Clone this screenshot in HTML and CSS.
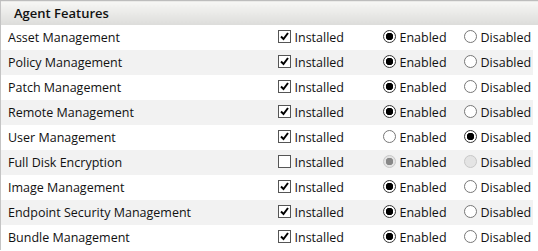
FILE: index.html
```html
<!DOCTYPE html>
<html lang="en">
<head>
    <meta charset="UTF-8">
    <title>Agent Features</title>
    <link rel="stylesheet" href="styles.css">
</head>
<body>
    <table class="features">
        <colgroup>
            <col class="col-name">
            <col class="col-inst">
            <col class="col-en">
            <col class="col-dis">
        </colgroup>
        <thead>
            <tr>
                <th colspan="4">Agent Features</th>
            </tr>
        </thead>
        <tbody>
            <tr>
                <td class="name">Asset Management</td>
                <td class="inst"><span class="check on"></span>Installed</td>
                <td class="en"><span class="radio on"></span>Enabled</td>
                <td class="dis"><span class="radio"></span>Disabled</td>
            </tr>
            <tr>
                <td class="name">Policy Management</td>
                <td class="inst"><span class="check on"></span>Installed</td>
                <td class="en"><span class="radio on"></span>Enabled</td>
                <td class="dis"><span class="radio"></span>Disabled</td>
            </tr>
            <tr>
                <td class="name">Patch Management</td>
                <td class="inst"><span class="check on"></span>Installed</td>
                <td class="en"><span class="radio on"></span>Enabled</td>
                <td class="dis"><span class="radio"></span>Disabled</td>
            </tr>
            <tr>
                <td class="name">Remote Management</td>
                <td class="inst"><span class="check on"></span>Installed</td>
                <td class="en"><span class="radio on"></span>Enabled</td>
                <td class="dis"><span class="radio"></span>Disabled</td>
            </tr>
            <tr>
                <td class="name">User Management</td>
                <td class="inst"><span class="check on"></span>Installed</td>
                <td class="en"><span class="radio"></span>Enabled</td>
                <td class="dis"><span class="radio on"></span>Disabled</td>
            </tr>
            <tr>
                <td class="name">Full Disk Encryption</td>
                <td class="inst"><span class="check"></span>Installed</td>
                <td class="en"><span class="radio on off"></span>Enabled</td>
                <td class="dis"><span class="radio off"></span>Disabled</td>
            </tr>
            <tr>
                <td class="name">Image Management</td>
                <td class="inst"><span class="check on"></span>Installed</td>
                <td class="en"><span class="radio on"></span>Enabled</td>
                <td class="dis"><span class="radio"></span>Disabled</td>
            </tr>
            <tr>
                <td class="name">Endpoint Security Management</td>
                <td class="inst"><span class="check on"></span>Installed</td>
                <td class="en"><span class="radio on"></span>Enabled</td>
                <td class="dis"><span class="radio"></span>Disabled</td>
            </tr>
            <tr>
                <td class="name">Bundle Management</td>
                <td class="inst"><span class="check on"></span>Installed</td>
                <td class="en"><span class="radio on"></span>Enabled</td>
                <td class="dis"><span class="radio"></span>Disabled</td>
            </tr>
        </tbody>
    </table>
</body>
</html>
```

FILE: styles.css
```css
body {
    margin: 0;
    font-family: "Open Sans", sans-serif;
    font-size: 12.5px;
    color: #111;
    background: #fff;
}
.features {
    width: 538px;
    border-collapse: collapse;
    table-layout: fixed;
}
.col-name {
    width: 274px;
}
.col-inst {
    width: 104px;
}
.col-en {
    width: 81px;
}
.features th {
    height: 24px;
    padding: 0 0 0 13px;
    text-align: left;
    font-size: 13px;
    font-weight: 600;
    background: linear-gradient(#f7f7f5, #dcdcda);
    border-top: 1px solid #bdbdbd;
    border-left: 1px solid #c4c4c4;
}
.features td {
    height: 25px;
    padding: 0;
    white-space: nowrap;
}
.features tbody tr:nth-child(even) td {
    background: #f2f2f2;
}
.features tbody tr td:last-child {
    box-shadow: inset -5px 0 0 #fff;
}
.name {
    padding-left: 7px !important;
    border-left: 1px solid #c4c4c4;
}
.inst {
    padding-left: 3px !important;
}
.en {
    padding-left: 4px !important;
}
.dis {
    padding-left: 4px !important;
}
.check, .radio {
    display: inline-block;
    width: 11px;
    height: 11px;
    margin-right: 4px;
    vertical-align: -1px;
    box-sizing: content-box;
    background: #fff;
}
.check {
    border: 1px solid #555;
}
.check.on {
    background: #fff url("data:image/svg+xml;utf8,<svg xmlns='http://www.w3.org/2000/svg' width='11' height='11'><path d='M2 5.5l2.5 2.5 4.5-6' fill='none' stroke='black' stroke-width='2'/></svg>") no-repeat;
}
.radio {
    border: 1px solid #777;
    border-radius: 50%;
}
.radio.on {
    border-color: #333;
    background: radial-gradient(circle, #000 0 3.5px, #fff 4px);
}
.radio.off {
    border-color: #c8c8c8;
    background: #e4e4e4;
}
.radio.on.off {
    background: radial-gradient(circle, #888 0 3.5px, #e4e4e4 4px);
}
```
